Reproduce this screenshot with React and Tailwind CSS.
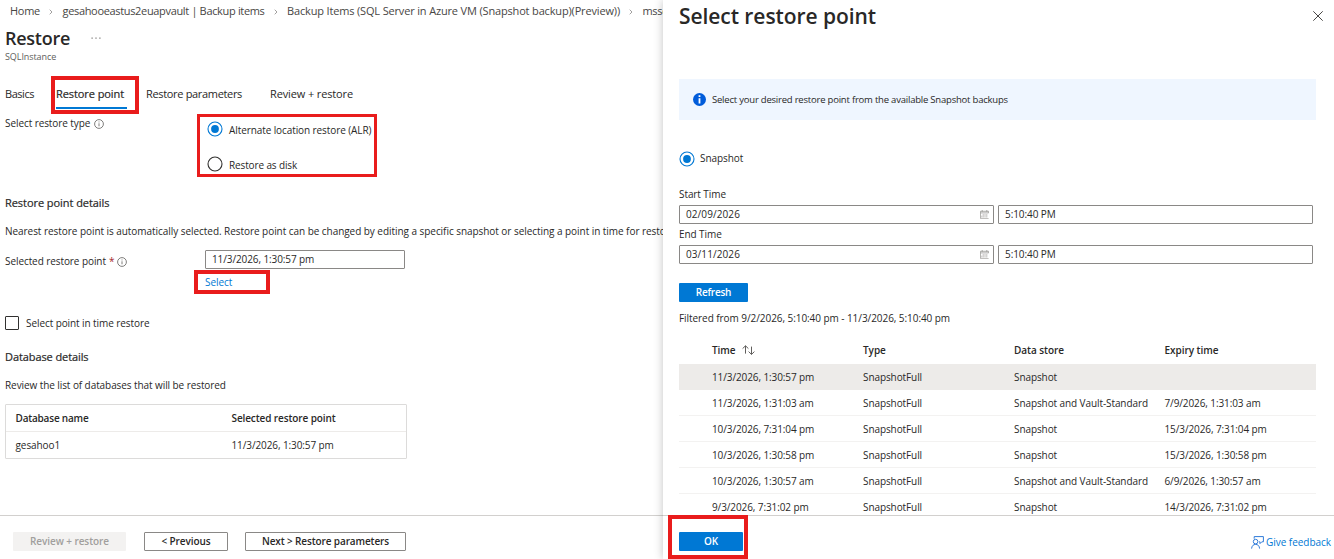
import React from "react";

const restorePoints = [
    { time: "11/3/2026, 1:30:57 pm", store: "Snapshot", expiry: "" },
    { time: "11/3/2026, 1:31:03 am", store: "Snapshot and Vault-Standard", expiry: "7/9/2026, 1:31:03 am" },
    { time: "10/3/2026, 7:31:04 pm", store: "Snapshot", expiry: "15/3/2026, 7:31:04 pm" },
    { time: "10/3/2026, 1:30:58 pm", store: "Snapshot", expiry: "15/3/2026, 1:30:58 pm" },
    { time: "10/3/2026, 1:30:57 am", store: "Snapshot and Vault-Standard", expiry: "6/9/2026, 1:30:57 am" },
    { time: "9/3/2026, 7:31:02 pm", store: "Snapshot", expiry: "14/3/2026, 7:31:02 pm" },
];

// ---- ICONS ----
const InfoIcon = () => (
    <svg viewBox="0 0 10 10" className="w-[10px] h-[10px]" fill="none" stroke="#605e5c" strokeWidth="0.8">
        <circle cx="5" cy="5" r="4.4" />
        <path d="M5 4.3v3M5 2.5v0.9" />
    </svg>
);

const InfoFilledIcon = () => (
    <svg viewBox="0 0 13 13" className="w-[13px] h-[13px]">
        <circle cx="6.5" cy="6.5" r="6.5" fill="#015cda" />
        <path d="M6.5 5.2v5.3M6.5 2.3v1.8" stroke="#fff" strokeWidth="1.8" />
    </svg>
);

const ChevronIcon = () => (
    <svg viewBox="0 0 4 6" className="w-1 h-1.5" fill="none" stroke="#8a8886" strokeWidth="0.8">
        <path d="M0.7 0.7L3 3L0.7 5.3" />
    </svg>
);

const MoreIcon = () => (
    <svg viewBox="0 0 10 2" className="w-[10px] h-[2px]" fill="#797775">
        <path d="M0.5 0.5h1.2v1.2h-1.2zM4.4 0.5h1.2v1.2h-1.2zM8.3 0.5h1.2v1.2h-1.2z" />
    </svg>
);

const CloseIcon = () => (
    <svg viewBox="0 0 10 10" className="w-[10px] h-[10px]" fill="none" stroke="#484644" strokeWidth="1">
        <path d="M0.3 0.3L9.7 9.7M9.7 0.3L0.3 9.7" />
    </svg>
);

const CalendarIcon = () => (
    <svg viewBox="0 0 9 9" className="w-[9px] h-[9px]" fill="none" stroke="#979593" strokeWidth="0.8">
        <path d="M0.4 8.6V1.3h8.2v1.6H0.4M2.2 0v1.8M6.8 0v1.8" />
        <path d="M0.4 8.5h8.2M3.2 4v3.6M5 4v3.6M6.8 4v3.6M1.8 5.6v2" stroke="#b3b0ad" />
    </svg>
);

const SortIcon = () => (
    <svg viewBox="0 0 13 10" className="w-[13px] h-[10px]" fill="none" stroke="#605e5c" strokeWidth="1">
        <path d="M3.5 8.6V0.8M0.6 3.6L3.5 0.8L6.4 3.6" />
        <path d="M9.5 1.6V9.4M6.6 6.6L9.5 9.4L12.4 6.6" />
    </svg>
);

const FeedbackIcon = () => (
    <svg viewBox="0 0 13 13" className="w-[13px] h-[13px]" fill="none" stroke="#2f7bd9" strokeWidth="1">
        <path d="M3.2 2.7V0.6h9.2v5.2h-1.6L9 7.6V5.8H8.2" />
        <circle cx="4.6" cy="5.6" r="2.3" />
        <path d="M0.6 12.6C0.8 9.8 2.4 8.4 4.6 8.4s3.8 1.4 4 4.2" />
    </svg>
);

const Radio = ({ checked }) => (
    <svg viewBox="0 0 16 16" className="w-4 h-4 shrink-0" fill="none">
        <circle cx="8" cy="8" r="7" stroke={checked ? "#0078d4" : "#323130"} strokeWidth="1.1" />
        {checked && <circle cx="8" cy="8" r="3.9" fill="#0078d4" />}
    </svg>
);

// red frame drawn over the page to point something out
const Highlight = ({ className }) => (
    <div className={`absolute border-[#e91c1c] pointer-events-none ${className}`} />
);

const DateTimeRow = ({ label, date, time }) => (
    <div>
        <div className="h-[19px] leading-[19px]">{label}</div>
        <div className="flex gap-1 mt-px">
            <div className="flex items-center justify-between w-[315px] h-[19px] pl-1.5 pr-1 border border-[#8a8886] rounded-[1px]">
                <span className="tracking-[0.09px]">{date}</span>
                <CalendarIcon />
            </div>
            <div className="flex items-center w-[315px] h-[19px] pl-1.5 border border-[#8a8886] rounded-[1px]">
                {time}
            </div>
        </div>
    </div>
);

const RestoreForm = () => (
    <main className="flex flex-col w-[663px] h-full overflow-hidden">
        <nav className="flex items-center h-[23px] pl-[10px] text-[11px] text-[#484644]">
            <span className="tracking-[-0.27px]">Home</span>
            <span className="flex shrink-0 justify-center w-[22.5px]"><ChevronIcon /></span>
            <span className="tracking-[-0.334px]">gesahooeastus2euapvault | Backup items</span>
            <span className="flex shrink-0 justify-center w-[22.5px]"><ChevronIcon /></span>
            <span className="tracking-[-0.159px]">Backup Items (SQL Server in Azure VM (Snapshot backup)(Preview))</span>
            <span className="flex shrink-0 justify-center w-[22.5px]"><ChevronIcon /></span>
            <span className="tracking-[-0.3px]">mssqlserver</span>
        </nav>

        <div className="pl-[5px]">
            <div className="flex items-center h-[28px] mt-px">
                <h1 className="w-[86px] text-[18px] font-semibold tracking-[-0.27px]">Restore</h1>
                <MoreIcon />
            </div>
            <div className="h-[10px] text-[9px] leading-[10px] text-[#605e5c]">SQLInstance</div>
        </div>

        {/* --- TABS --- */}
        <div className="flex h-[30px] mt-[17px] pl-[5px] text-[11px] leading-[30px]">
            <span className="w-[51px] tracking-[-0.458px]">Basics</span>
            <span className="w-[71px] h-full mr-[19px] border-b-2 border-[#0078d4] font-medium [-webkit-text-stroke:0.2px]">Restore point</span>
            <span className="w-[124px] tracking-[-0.329px]">Restore parameters</span>
            <span className="tracking-[-0.13px]">Review + restore</span>
        </div>

        <div className="flex h-[84px] pl-[5px]">
            <div className="flex items-center gap-1 w-[202px] h-[14px] mt-[8px]">
                <span className="-mt-px">Select restore type</span>
                <InfoIcon />
            </div>
            <div className="flex flex-col pt-[11.5px]">
                <label className="flex gap-1.5 h-[35px]">
                    <Radio checked />
                    <span className="mt-px leading-4 tracking-[-0.09px]">Alternate location restore (ALR)</span>
                </label>
                <label className="flex gap-1.5">
                    <Radio />
                    <span className="mt-px leading-4 tracking-[-0.13px]">Restore as disk</span>
                </label>
            </div>
        </div>

        {/* --- RESTORE POINT --- */}
        <div className="pl-[5px]">
            <h2 className="h-[20px] leading-5 text-[11px] font-medium tracking-[-0.056px] [-webkit-text-stroke:0.2px]">Restore point details</h2>
            <p className="h-[20px] mt-[8px] leading-5 tracking-[-0.05px]">
                Nearest restore point is automatically selected. Restore point can be changed by editing a specific snapshot or selecting a point in time for restore.
            </p>
            <div className="flex h-[19px] mt-[9px]">
                <div className="flex items-center w-[200px] h-[23px]">
                    <span>Selected restore point</span>
                    <span className="ml-[3px] mr-[3px] text-[#a4262c]">*</span>
                    <InfoIcon />
                </div>
                <div className="flex items-center w-[200px] h-[19px] pl-1.5 border border-[#8a8886] rounded-[1px] tracking-[-0.1px]">
                    11/3/2026, 1:30:57 pm
                </div>
            </div>
            <div className="h-[28px] pl-[200px] leading-[27px] text-[#0078d4]">Select</div>
            <label className="flex items-center gap-[7px] h-[14px] mt-[19px]">
                <span className="w-[14px] h-[14px] border border-[#323130] rounded-[1px]" />
                <span className="mt-px">Select point in time restore</span>
            </label>
        </div>

        {/* --- DATABASES --- */}
        <div className="pl-[5px]">
            <h2 className="h-[20px] mt-[17px] leading-5 text-[11px] font-medium tracking-[-0.093px] [-webkit-text-stroke:0.2px]">Database details</h2>
            <p className="h-[20px] mt-[8px] leading-5">Review the list of databases that will be restored</p>
            <div className="w-[402px] h-[55px] mt-[9px] border border-[#dcdbda] rounded-[1px]">
                <div className="flex items-center h-[27px] pl-[9.5px] border-b border-[#edebe9] font-semibold">
                    <span className="w-[216px] tracking-[-0.2px]">Database name</span>
                    <span className="tracking-[-0.11px]">Selected restore point</span>
                </div>
                <div className="flex items-center h-[27px] pl-[9.5px]">
                    <span className="w-[216px]">gesahoo1</span>
                    <span className="tracking-[-0.1px]">11/3/2026, 1:30:57 pm</span>
                </div>
            </div>
        </div>

        <footer className="flex h-[44px] mt-auto pl-[13px] pt-4 border-t border-[#d2d0ce] font-semibold">
            <button className="w-[113px] h-[19px] bg-[#f3f2f1] text-[#a19f9d] rounded-[1px]">Review + restore</button>
            <button className="w-[84px] h-[19px] ml-[18px] border border-[#8a8886] rounded-[1px]">&lt; Previous</button>
            <button className="w-[161px] h-[19px] ml-[17px] border border-[#8a8886] rounded-[1px] tracking-[-0.12px]">Next &gt; Restore parameters</button>
        </footer>
    </main>
);

const RestorePointPanel = () => (
    <aside className="relative flex flex-col w-[671px] h-full bg-white shadow-[0_0_9px_rgba(0,0,0,0.24)]">
        <header className="flex items-center justify-between h-[32px] pl-4 pr-[11px]">
            <h1 className="text-[21px] font-semibold leading-8 tracking-[-0.06px] -mt-px">Select restore point</h1>
            <CloseIcon />
        </header>

        <div className="flex items-center w-[637px] h-[41px] mt-[47px] ml-4 pl-[14px] gap-[6px] bg-[#eff6ff] text-[9.5px] tracking-[-0.21px]">
            <InfoFilledIcon />
            <span className="mt-[2px]">Select your desired restore point from the available Snapshot backups</span>
        </div>

        <div className="pl-4">
            <label className="flex items-center gap-[5px] h-4 mt-[30.5px]">
                <Radio checked />
                <span>Snapshot</span>
            </label>

            <div className="mt-[18.5px]">
                <DateTimeRow label="Start Time" date="02/09/2026" time="5:10:40 PM" />
                <div className="h-px" />
                <DateTimeRow label="End Time" date="03/11/2026" time="5:10:40 PM" />
            </div>

            <button className="block w-[69px] h-[19px] mt-[19px] bg-[#0078d4] text-white font-semibold tracking-[-0.25px] rounded-[1px]">Refresh</button>
            <p className="h-5 mt-[6px] leading-5 tracking-[-0.06px]">Filtered from 9/2/2026, 5:10:40 pm - 11/3/2026, 5:10:40 pm</p>
        </div>

        {/* --- RESTORE POINTS LIST --- */}
        <div className="w-[637px] h-[179px] ml-4 mt-[8px] overflow-hidden">
            <div className="flex items-center h-[28px] pl-[33px] font-semibold tracking-[-0.05px]">
                <span className="flex items-center gap-1.5 w-[151px]">Time <SortIcon /></span>
                <span className="w-[151px]">Type</span>
                <span className="w-[150.5px]">Data store</span>
                <span>Expiry time</span>
            </div>
            {restorePoints.map((point, i) => (
                <div
                    key={point.time}
                    className={`flex items-center h-[26px] pl-[33px] pt-px border-b ${i === 0 ? "bg-[#edebe9] border-[#edebe9]" : "border-[#f3f2f1]"}`}
                >
                    <span className="w-[151px] tracking-[-0.1px]">{point.time}</span>
                    <span className="w-[151px] tracking-[-0.09px]">SnapshotFull</span>
                    <span className="w-[150.5px] tracking-[-0.09px]">{point.store}</span>
                    <span className="tracking-[-0.1px]">{point.expiry}</span>
                </div>
            ))}
        </div>

        <footer className="flex justify-between h-[44px] mt-auto pl-4 pr-[3px] pt-4 border-t border-[#d2d0ce]">
            <button className="w-[64px] h-[19px] bg-[#0078d4] text-white font-semibold rounded-[1px]">OK</button>
            <a className="flex items-center gap-[2px] h-[20px] text-[#0078d4] tracking-[-0.03px]">
                <FeedbackIcon />
                <span className="mt-px">Give feedback</span>
            </a>
        </footer>
    </aside>
);

export default function App() {
    return (
        <div className="relative flex w-[1334px] h-[559px] overflow-hidden bg-white font-['Open_Sans','Noto_Sans',sans-serif] text-[10px] tracking-[-0.08px] text-[#292827] whitespace-nowrap">
            <RestoreForm />
            <RestorePointPanel />

            <Highlight className="left-[51px] top-[76px] w-[88px] h-[38px] border-4" />
            <Highlight className="left-[197px] top-[114px] w-[180px] h-[63px] border-3" />
            <Highlight className="left-[194px] top-[270px] w-[76px] h-[24px] border-4" />
            <Highlight className="left-[668px] top-[515px] w-[80px] h-[44px] border-4" />
        </div>
    );
}
